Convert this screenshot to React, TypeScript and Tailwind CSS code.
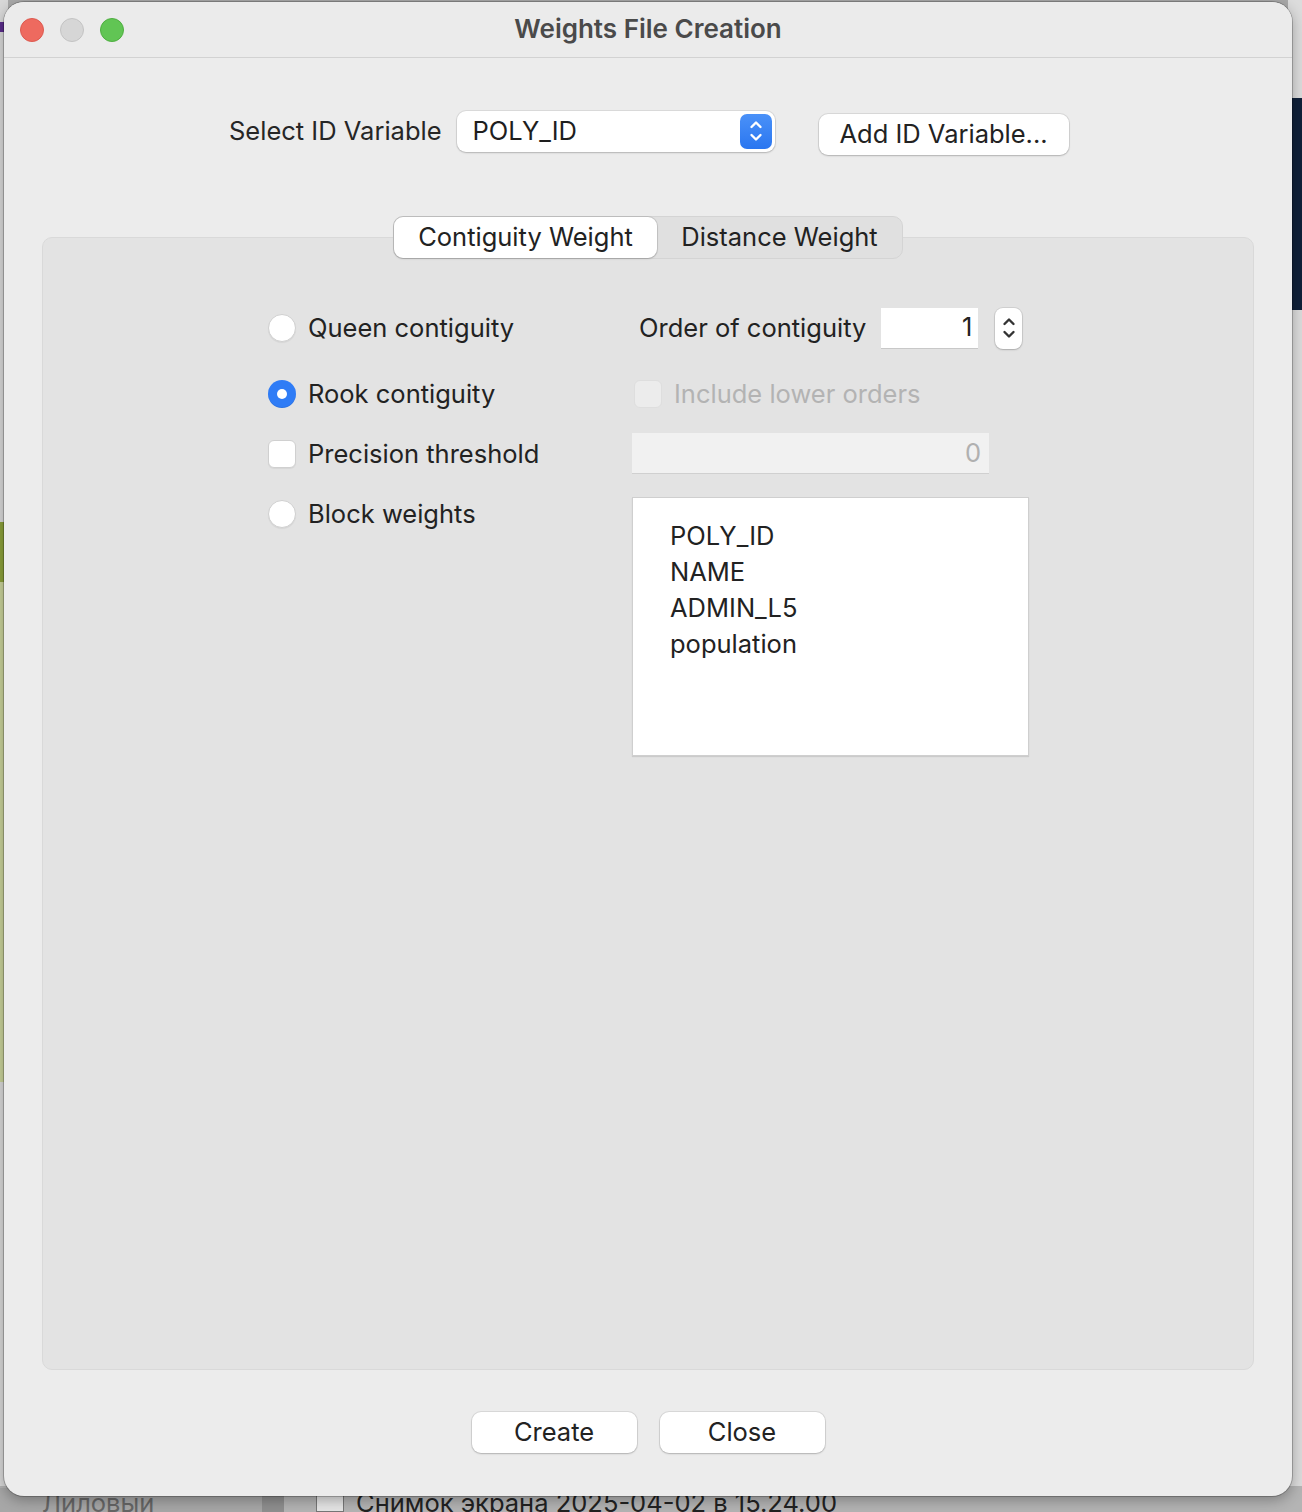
import React from "react";

const font = { fontFamily: "Inter, 'Noto Sans', 'Liberation Sans', sans-serif" };

function Radio({ checked = false }: { checked?: boolean }) {
  if (checked) {
    return (
      <span className="flex h-[28px] w-[28px] shrink-0 items-center justify-center rounded-full bg-[#2f7cf6] shadow-[inset_0_-1px_0_rgba(0,0,0,0.08)]">
        <span className="h-[10px] w-[10px] rounded-full bg-white" />
      </span>
    );
  }
  return <span className="h-[28px] w-[28px] shrink-0 rounded-full border border-[#d0d0d0] bg-white shadow-[0_1px_1px_rgba(0,0,0,0.06)]" />;
}

function Chevrons({ color }: { color: string }) {
  return (
    <svg width="16" height="26" viewBox="0 0 16 26" fill="none" stroke={color} strokeWidth="2.4" strokeLinecap="round" strokeLinejoin="round">
      <path d="M3.5 9 L8 4.5 L12.5 9" />
      <path d="M3.5 17 L8 21.5 L12.5 17" />
    </svg>
  );
}

function MacButton({ label, className }: { label: string; className: string }) {
  return (
    <button
      className={`flex h-[41px] items-center justify-center rounded-[9px] bg-white text-[25.5px] text-[#222] shadow-[0_0_0_1px_rgba(0,0,0,0.08),0_1px_2px_rgba(0,0,0,0.18)] ${className}`}
    >
      {label}
    </button>
  );
}

export default function App() {
  return (
    <div className="relative h-[1512px] w-[1302px] overflow-hidden bg-[#a9a9a9]" style={font}>
      {/* desktop behind the window */}
      <div className="absolute left-0 top-0 h-[1512px] w-[8px] bg-[#d8d8d8]">
        <div className="mt-[22px] h-[10px] bg-[#5b2d8c]" />
        <div className="mt-[490px] h-[60px] bg-[#8ba03a]" />
        <div className="h-[500px] bg-[#c9d29a]" />
      </div>
      <div className="absolute right-0 top-0 h-[1512px] w-[14px] bg-[#dcdcdc]">
        <div className="mt-[98px] h-[212px] bg-[#10213a]" />
      </div>
      <div className="absolute bottom-0 left-0 flex h-[26px] w-[1302px] items-start bg-[#b4b4b4] pt-[2px] text-[25.5px] leading-[30px] text-[#666]">
        <div className="flex h-full w-[262px] items-start bg-[#a7a7a7] pl-[42px]">Лиловый</div>
        <div className="h-full w-[22px] bg-[#8f8f8f]" />
        <div className="flex items-start pl-[32px] text-[#222]">
          <span className="mr-[12px] mt-[2px] inline-block h-[22px] w-[28px] border border-[#777] bg-[#e5e5e5]" />
          Снимок экрана 2025-04-02 в 15.24.00
        </div>
      </div>

      {/* window */}
      <div className="absolute left-[4px] top-[2px] flex h-[1494px] w-[1288px] flex-col overflow-hidden rounded-[20px] bg-[#ececec] shadow-[0_0_0_1px_rgba(0,0,0,0.22),0_4px_14px_rgba(0,0,0,0.3)]">
        {/* title bar */}
        <div className="relative flex h-[56px] shrink-0 items-center justify-center border-b border-[#d2d2d2] bg-[#ebebeb]">
          <div className="absolute left-[16px] top-[16px] flex gap-[16px]">
            <span className="h-[24px] w-[24px] rounded-full border border-[#dc5a50] bg-[#ee6a5f]" />
            <span className="h-[24px] w-[24px] rounded-full border border-[#c3c3c3] bg-[#d6d6d6]" />
            <span className="h-[24px] w-[24px] rounded-full border border-[#4fae41] bg-[#61c554]" />
          </div>
          <span className="-mt-[2px] text-[26px] font-semibold text-[#4a4a4a]">Weights File Creation</span>
        </div>

        {/* ID variable row */}
        <div className="mt-[51px] flex h-[44px] items-center pl-[225px]">
          <span className="text-[25.5px] text-[#262626]">Select ID Variable</span>
          <div className="ml-[15px] flex h-[41px] w-[318px] items-center justify-between rounded-[9px] bg-white pl-[16px] pr-[3px] shadow-[0_0_0_1px_rgba(0,0,0,0.07),0_1px_2px_rgba(0,0,0,0.18)]">
            <span className="text-[25.5px] text-[#1e1e1e]">POLY_ID</span>
            <span className="flex h-[35px] w-[32px] items-center justify-center rounded-[7px] bg-gradient-to-b from-[#4a91f8] to-[#2a76f0]">
              <Chevrons color="#ffffff" />
            </span>
          </div>
          <MacButton label="Add ID Variable..." className="ml-[44px] mt-[6px] w-[250px]" />
        </div>

        {/* tab panel */}
        <div className="relative mx-[38px] mt-[84px] flex h-[1133px] flex-col items-center rounded-[10px] border border-[#d9d9d9] bg-[#e3e3e3]">
          <div className="-mt-[22px] flex h-[43px] w-[510px] rounded-[10px] border border-[#d4d4d4] bg-[#e0e0e0] text-[25.5px] text-[#222]">
            <div className="flex w-[263px] items-center justify-center rounded-[9px] bg-white shadow-[0_0_0_1px_rgba(0,0,0,0.1),0_1px_2px_rgba(0,0,0,0.15)]">
              Contiguity Weight
            </div>
            <div className="flex flex-1 items-center justify-center">Distance Weight</div>
          </div>

          <div className="mt-[48px] flex w-full pl-[225px] text-[25.5px] text-[#222]">
            {/* left column */}
            <div className="flex w-[364px] flex-col">
              <div className="flex h-[42px] items-center gap-[12px]">
                <Radio />
                <span>Queen contiguity</span>
              </div>
              <div className="mt-[24px] flex h-[42px] items-center gap-[12px]">
                <Radio checked />
                <span>Rook contiguity</span>
              </div>
              <div className="mt-[18px] flex h-[42px] items-center gap-[12px]">
                <span className="h-[28px] w-[28px] shrink-0 rounded-[6px] border border-[#d0d0d0] bg-white shadow-[0_1px_1px_rgba(0,0,0,0.06)]" />
                <span>Precision threshold</span>
              </div>
              <div className="mt-[18px] flex h-[42px] items-center gap-[12px]">
                <Radio />
                <span>Block weights</span>
              </div>
            </div>

            {/* right column */}
            <div className="flex flex-col">
              <div className="flex h-[42px] items-center">
                <span className="ml-[7px]">Order of contiguity</span>
                <div className="ml-[15px] flex h-[41px] w-[97px] items-center justify-end border-b border-[#c8c8c8] bg-white pr-[6px]">1</div>
                <span className="ml-[17px] flex h-[41px] w-[27px] flex-col items-center justify-center rounded-[8px] bg-white shadow-[0_0_0_1px_rgba(0,0,0,0.08),0_1px_2px_rgba(0,0,0,0.18)]">
                  <Chevrons color="#333333" />
                </span>
              </div>
              <div className="mt-[24px] flex h-[42px] items-center gap-[12px] pl-[2px] text-[#b3b3b3]">
                <span className="h-[28px] w-[28px] rounded-[6px] border border-[#dedede] bg-[#ececec]" />
                <span>Include lower orders</span>
              </div>
              <div className="mt-[18px] flex h-[41px] w-[357px] items-center justify-end border-b border-[#d0d0d0] bg-[#f1f1f1] pr-[8px] text-[#b0b0b0]">
                0
              </div>
              <div className="mt-[23px] flex h-[259px] w-[397px] flex-col border border-[#cfcfcf] bg-white pl-[37px] pt-[20px] shadow-[0_1px_1px_rgba(0,0,0,0.1)]">
                {["POLY_ID", "NAME", "ADMIN_L5", "population"].map((v) => (
                  <span key={v} className="h-[36px] leading-[36px] text-[#222]">
                    {v}
                  </span>
                ))}
              </div>
            </div>
          </div>
        </div>

        {/* footer buttons */}
        <div className="mt-[42px] flex justify-center gap-[23px]">
          <MacButton label="Create" className="w-[165px]" />
          <MacButton label="Close" className="w-[165px]" />
        </div>
      </div>
    </div>
  );
}
